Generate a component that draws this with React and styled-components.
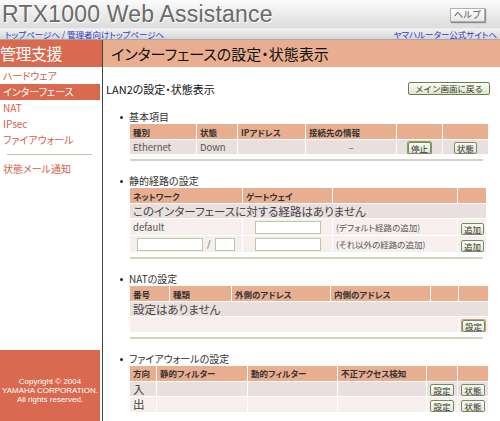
import styled, { createGlobalStyle } from "styled-components";

const Global = createGlobalStyle`
  html, body { margin: 0; padding: 0; background: #fff; }
  body {
    font-family: "Noto Sans CJK JP", "Liberation Sans", sans-serif;
    font-feature-settings: "palt";
  }
`;

const menu = [
  { label: "ハードウェア" },
  { label: "インターフェース", active: true },
  { label: "NAT" },
  { label: "IPsec" },
  { label: "ファイアウォール" },
];

const App = () => {
  return (
    <Page>
      <Global />
      <Header>
        <Logo>RTX1000 Web Assistance</Logo>
        <HelpButton>ヘルプ</HelpButton>
      </Header>
      <LinkBar>
        <span>
          <a>トップページへ</a> / <a>管理者向けトップページへ</a>
        </span>
        <a>ヤマハルーター公式サイトへ</a>
      </LinkBar>
      <Body>
        <Sidebar>
          <SideTitle>管理支援</SideTitle>
          <Menu>
            {menu.map((m) => (
              <MenuItem key={m.label} $active={m.active}>
                {m.label}
              </MenuItem>
            ))}
            <Separator />
            <MenuItem>状態メール通知</MenuItem>
          </Menu>
          <Copyright>
            Copyright © 2004
            <br />
            YAMAHA CORPORATION.
            <br />
            All rights reserved.
          </Copyright>
        </Sidebar>
        <Main>
          <MainTitle>インターフェースの設定・状態表示</MainTitle>
          <Content>
            <TopRow>
              <PageHeading>LAN2の設定・状態表示</PageHeading>
              <BackButton>メイン画面に戻る</BackButton>
            </TopRow>

            <Section $first>
              <SectionTitle>基本項目</SectionTitle>
              <Table>
                <colgroup>
                  {[66, 40, 67, 90, 45, 45].map((w, i) => (
                    <col key={i} width={w} />
                  ))}
                </colgroup>
                <thead>
                  <tr>
                    <Th>種別</Th>
                    <Th>状態</Th>
                    <Th>IPアドレス</Th>
                    <Th>接続先の情報</Th>
                    <Th />
                    <Th />
                  </tr>
                </thead>
                <tbody>
                  <Tr>
                    <Td>Ethernet</Td>
                    <Td>Down</Td>
                    <Td />
                    <Td $center>–</Td>
                    <Td $center>
                      <SmallButton $ring="#7ea35a">停止</SmallButton>
                    </Td>
                    <Td $center>
                      <SmallButton>状態</SmallButton>
                    </Td>
                  </Tr>
                </tbody>
              </Table>
              <Rule />
            </Section>

            <Section>
              <SectionTitle>静的経路の設定</SectionTitle>
              <Table>
                <colgroup>
                  {[112, 89, 124, 28].map((w, i) => (
                    <col key={i} width={w} />
                  ))}
                </colgroup>
                <thead>
                  <tr>
                    <Th>ネットワーク</Th>
                    <Th>ゲートウェイ</Th>
                    <Th />
                    <Th />
                  </tr>
                </thead>
                <tbody>
                  <Tr>
                    <Td colSpan={4} $big>
                      このインターフェースに対する経路はありません
                    </Td>
                  </Tr>
                  <Tr $alt>
                    <Td>default</Td>
                    <Td $center>
                      <Field $w={66} />
                    </Td>
                    <Td $note>(デフォルト経路の追加)</Td>
                    <Td $center>
                      <SmallButton>追加</SmallButton>
                    </Td>
                  </Tr>
                  <Tr $alt>
                    <Td>
                      <NetCell>
                        <Field $w={66} />
                        <span>/</span>
                        <Field $w={20} />
                      </NetCell>
                    </Td>
                    <Td $center>
                      <Field $w={66} />
                    </Td>
                    <Td $note>(それ以外の経路の追加)</Td>
                    <Td $center>
                      <SmallButton>追加</SmallButton>
                    </Td>
                  </Tr>
                </tbody>
              </Table>
              <Rule />
            </Section>

            <Section>
              <SectionTitle>NATの設定</SectionTitle>
              <Table>
                <colgroup>
                  {[39, 61, 98, 99, 27, 29].map((w, i) => (
                    <col key={i} width={w} />
                  ))}
                </colgroup>
                <thead>
                  <tr>
                    <Th>番号</Th>
                    <Th>種類</Th>
                    <Th>外側のアドレス</Th>
                    <Th>内側のアドレス</Th>
                    <Th />
                    <Th />
                  </tr>
                </thead>
                <tbody>
                  <Tr>
                    <Td colSpan={6} $big>
                      設定はありません
                    </Td>
                  </Tr>
                  <Tr $alt>
                    <Td colSpan={5} />
                    <Td $center>
                      <SmallButton $ring="#c9a072">設定</SmallButton>
                    </Td>
                  </Tr>
                </tbody>
              </Table>
              <Rule />
            </Section>

            <Section>
              <SectionTitle>ファイアウォールの設定</SectionTitle>
              <Table>
                <colgroup>
                  {[26, 90, 89, 88, 30, 30].map((w, i) => (
                    <col key={i} width={w} />
                  ))}
                </colgroup>
                <thead>
                  <tr>
                    <Th>方向</Th>
                    <Th>静的フィルター</Th>
                    <Th>動的フィルター</Th>
                    <Th>不正アクセス検知</Th>
                    <Th />
                    <Th />
                  </tr>
                </thead>
                <tbody>
                  {["入", "出"].map((dir, i) => (
                    <Tr key={dir} $alt={i === 1}>
                      <Td $big>{dir}</Td>
                      <Td />
                      <Td />
                      <Td />
                      <Td $center>
                        <SmallButton>設定</SmallButton>
                      </Td>
                      <Td $center>
                        <SmallButton>状態</SmallButton>
                      </Td>
                    </Tr>
                  ))}
                </tbody>
              </Table>
            </Section>
          </Content>
        </Main>
      </Body>
    </Page>
  );
};

export default App;

const Page = styled.div`
  width: 500px;
  height: 421px;
  overflow: hidden;
  display: flex;
  flex-direction: column;
`;

const Header = styled.div`
  height: 28px;
  display: flex;
  align-items: center;
  justify-content: space-between;
  padding: 0 15px 0 2px;
  background: linear-gradient(#fbfbfb, #dcdcdc);
  border-bottom: 1px solid #ececec;
`;

const Logo = styled.div`
  font-family: "Liberation Sans", Arial, sans-serif;
  font-size: 23px;
  letter-spacing: 0.2px;
  color: #6a6a6a;
  text-shadow: 1px 1px 0 #ffffff;
  line-height: 28px;
`;

const HelpButton = styled.button`
  width: 35px;
  height: 14px;
  padding: 0;
  margin-top: 2px;
  font-family: inherit;
  font-size: 9px;
  line-height: 12px;
  color: #555;
  background: linear-gradient(#ffffff, #e6e6e6);
  border: 1px solid #b0b0b0;
  box-shadow: 1px 1px 1px #8a8a8a;
`;

const LinkBar = styled.div`
  height: 10px;
  display: flex;
  justify-content: space-between;
  align-items: center;
  padding: 0 3px 0 5px;
  font-size: 8.5px;
  line-height: 10px;
  color: #2a3bcc;
  background: linear-gradient(#f2f2f2, #d6d6d6);
  border-bottom: 1px solid #a8a8a8;

  a {
    color: #2a3bcc;
  }
`;

const Body = styled.div`
  flex: 1;
  min-height: 0;
  display: flex;
`;

const Sidebar = styled.div`
  width: 102px;
  display: flex;
  flex-direction: column;
  border-right: 1px solid #444;
`;

const SideTitle = styled.div`
  height: 27px;
  line-height: 27px;
  background: #d96a4f;
  color: #fff;
  font-size: 16px;
  letter-spacing: -0.5px;
`;

const Menu = styled.div`
  padding-top: 1px;
  display: flex;
  flex-direction: column;
`;

const MenuItem = styled.div`
  height: 16px;
  line-height: 16px;
  padding-left: 3px;
  margin-right: 2px;
  font-size: 10px;
  color: ${(p) => (p.$active ? "#fff" : "#d4604a")};
  background: ${(p) => (p.$active ? "#d96a4f" : "transparent")};
`;

const Separator = styled.div`
  height: 1px;
  background: #c9c2a6;
  margin: 6px 10px 6px 7px;
`;

const Copyright = styled.div`
  margin-top: auto;
  height: 71px;
  box-sizing: border-box;
  padding-top: 27px;
  margin-right: 2px;
  background: #d96a4f;
  color: #fff;
  font-family: "Liberation Sans", Arial, sans-serif;
  font-size: 8px;
  line-height: 9px;
  text-align: center;
`;

const Main = styled.div`
  flex: 1;
  display: flex;
  flex-direction: column;
`;

const MainTitle = styled.div`
  height: 27px;
  line-height: 27px;
  padding-left: 8px;
  background: #e9ae90;
  color: #111;
  font-size: 15px;
`;

const Content = styled.div`
  padding: 15px 10px 0 3px;
`;

const TopRow = styled.div`
  display: flex;
  justify-content: space-between;
  align-items: center;
  height: 13px;
`;

const PageHeading = styled.div`
  font-size: 11px;
  color: #111;
`;

const BackButton = styled.button`
  width: 82px;
  height: 13px;
  padding: 0;
  font-family: inherit;
  font-size: 8.5px;
  line-height: 11px;
  color: #333;
  background: linear-gradient(#fbfdf2, #dfe7c8);
  border: 1px solid #6f7a58;
  border-radius: 2px;
`;

const Section = styled.div`
  margin-top: ${(p) => (p.$first ? "16px" : "14px")};
`;

const SectionTitle = styled.div`
  position: relative;
  padding-left: 23px;
  font-size: 10px;
  line-height: 12px;
  color: #333;

  &::before {
    content: "";
    position: absolute;
    left: 14px;
    top: 5px;
    width: 3px;
    height: 3px;
    border-radius: 50%;
    background: #222;
  }
`;

const Table = styled.table`
  margin-left: 23px;
  width: 355px;
  table-layout: fixed;
  border-collapse: separate;
  border-spacing: 1px;
`;

const Th = styled.th`
  height: 15px;
  padding: 0 3px;
  background: #e9ae90;
  color: #333;
  font-size: 8.5px;
  font-weight: bold;
  text-align: left;
  white-space: nowrap;
  overflow: hidden;
`;

const Tr = styled.tr`
  background: ${(p) => (p.$alt ? "#f6efed" : "#e9dfdf")};
`;

const Td = styled.td`
  height: 14px;
  padding: 0 3px;
  font-size: ${(p) => (p.$big ? "11.5px" : p.$note ? "8.5px" : "9.5px")};
  line-height: 14px;
  color: ${(p) => (p.$big ? "#444" : "#555")};
  text-align: ${(p) => (p.$center ? "center" : "left")};
  white-space: nowrap;
  overflow: hidden;
`;

const NetCell = styled.div`
  display: flex;
  align-items: center;
  gap: 4px;
  padding-left: 4px;
  font-size: 9px;
`;

const Field = styled.input`
  display: inline-block;
  vertical-align: middle;
  width: ${(p) => p.$w}px;
  height: 13px;
  box-sizing: border-box;
  padding: 0;
  margin: 1px 0;
  border: 1px solid #b9c9a4;
  background: #fff;
`;

const SmallButton = styled.button`
  height: 12px;
  padding: 0 2px;
  font-family: inherit;
  font-size: 8.5px;
  line-height: 10px;
  color: #333;
  background: linear-gradient(#fbfcf3, #e3e8d3);
  border: 1px solid #7d8768;
  border-radius: 2px;
  box-shadow: ${(p) => (p.$ring ? `0 0 0 1px ${p.$ring}` : "none")};
  vertical-align: middle;
`;

const Rule = styled.div`
  height: 2px;
  width: 353px;
  margin: 4px 0 0 24px;
  background: #d6d2c4;
`;
